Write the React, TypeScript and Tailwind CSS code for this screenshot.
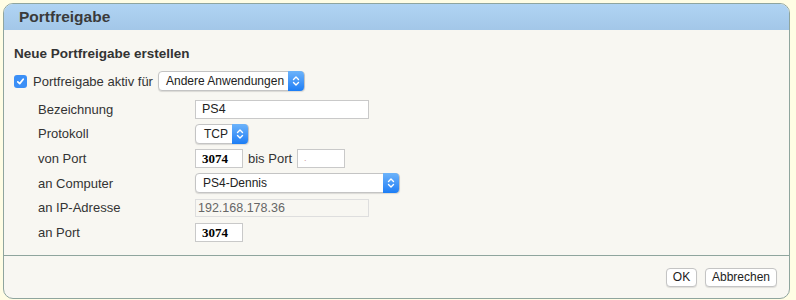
const sans = { fontFamily: '"Liberation Sans", Arial, sans-serif' };

function Arrows({ h = 19 }: { h?: number }) {
  return (
    <span className="flex w-[16px] shrink-0 items-center justify-center rounded-r-[4px] bg-gradient-to-b from-[#6cb3fa] to-[#1a7df5]" style={{ height: h }}>
      <svg width="8" height="12" viewBox="0 0 8 12" fill="none" stroke="white" strokeWidth="1.4" strokeLinecap="round" strokeLinejoin="round">
        <path d="M1.5 4.5 L4 2 L6.5 4.5" />
        <path d="M1.5 7.5 L4 10 L6.5 7.5" />
      </svg>
    </span>
  );
}

function Select({ value, w, pl = "pl-[7px]", className = "" }: { value: string; w: string; pl?: string; className?: string }) {
  return (
    <div className={`flex h-[20px] shrink-0 items-center justify-between rounded-[4px] border border-[#c4c4c4] bg-white shadow-[0_1px_1px_rgba(0,0,0,0.12)] ${w} ${className}`}>
      <span className={`whitespace-nowrap text-[12px] text-[#222] ${pl}`}>{value}</span>
      <Arrows h={20} />
    </div>
  );
}

function Row({ label, children }: { label: string; children: React.ReactNode }) {
  return (
    <div className="flex h-[24.6px] items-center">
      <span className="w-[157px] shrink-0 text-[13px] text-[#333]">{label}</span>
      {children}
    </div>
  );
}

const boxCls = "flex h-[19px] shrink-0 items-center border border-[#c9c9c9] bg-white px-[6px]";
const numCls = "text-[13px] font-bold text-black";
const serif = { fontFamily: '"Liberation Serif", "Times New Roman", serif' };
const btnCls = "h-[19px] rounded-[4px] border border-[#c4c4c4] bg-white text-[12px] leading-none text-[#222] shadow-[0_1px_1px_rgba(0,0,0,0.1)]";

export default function App() {
  return (
    <div className="h-[300px] w-[796px] bg-[#fffde4] pl-[3px] pr-[6px] pt-[3px]" style={sans}>
      <div className="flex h-[296px] flex-col overflow-hidden rounded-[10px] border border-[#8fa59e] bg-[#f8f7f2]">
        <div className="flex h-[26px] items-center bg-gradient-to-b from-[#b0d4f3] to-[#a3c7e8] pl-[15px]">
          <span className="text-[15.5px] font-bold text-[#3a3a3a]">Portfreigabe</span>
        </div>
        <div className="flex-1 pl-[10px] pt-[14px]">
          <div className="text-[13.5px] font-bold text-[#333]">Neue Portfreigabe erstellen</div>
          <div className="mt-[7px] flex items-center">
            <span className="flex h-[13px] w-[13px] items-center justify-center rounded-[3px] bg-[#3b8ff6]">
              <svg width="9" height="9" viewBox="0 0 9 9" fill="none" stroke="white" strokeWidth="1.7" strokeLinecap="round" strokeLinejoin="round">
                <path d="M1.8 4.8 L3.7 6.6 L7.2 2.2" />
              </svg>
            </span>
            <span className="ml-[6px] text-[13px] text-[#333]">Portfreigabe aktiv für</span>
            <Select value="Andere Anwendungen" w="w-[147px]" className="ml-[5px]" />
          </div>
          <div className="mt-[6px] pl-[24px]">
            <Row label="Bezeichnung">
              <div className={`${boxCls} w-[174px]`}>
                <span className="text-[12.5px] text-[#222]">PS4</span>
              </div>
            </Row>
            <Row label="Protokoll">
              <Select value="TCP" w="w-[54px]" pl="pl-[8px]" />
            </Row>
            <Row label="von Port">
              <div className={`${boxCls} w-[48px]`}>
                <span className={numCls} style={serif}>3074</span>
              </div>
              <span className="ml-[5px] text-[13px] text-[#333]">bis Port</span>
              <div className={`${boxCls} ml-[5px] w-[48px]`}>
                <span className="text-[9px] text-[#c99]">.</span>
              </div>
            </Row>
            <Row label="an Computer">
              <Select value="PS4-Dennis" w="w-[205px]" />
            </Row>
            <Row label="an IP-Adresse">
              <div className="flex h-[18px] w-[174px] shrink-0 items-center border border-[#dedede] bg-[#f8f7f2] px-[2px]">
                <span className="text-[12.5px] text-[#666]">192.168.178.36</span>
              </div>
            </Row>
            <Row label="an Port">
              <div className={`${boxCls} w-[48px]`}>
                <span className={numCls} style={serif}>3074</span>
              </div>
            </Row>
          </div>
        </div>
        <div className="flex h-[43px] items-center justify-end gap-[8px] border-t border-[#8fa59e] pr-[12px]">
          <button className={`${btnCls} w-[31px]`}>OK</button>
          <button className={`${btnCls} w-[72px]`}>Abbrechen</button>
        </div>
      </div>
    </div>
  );
}
